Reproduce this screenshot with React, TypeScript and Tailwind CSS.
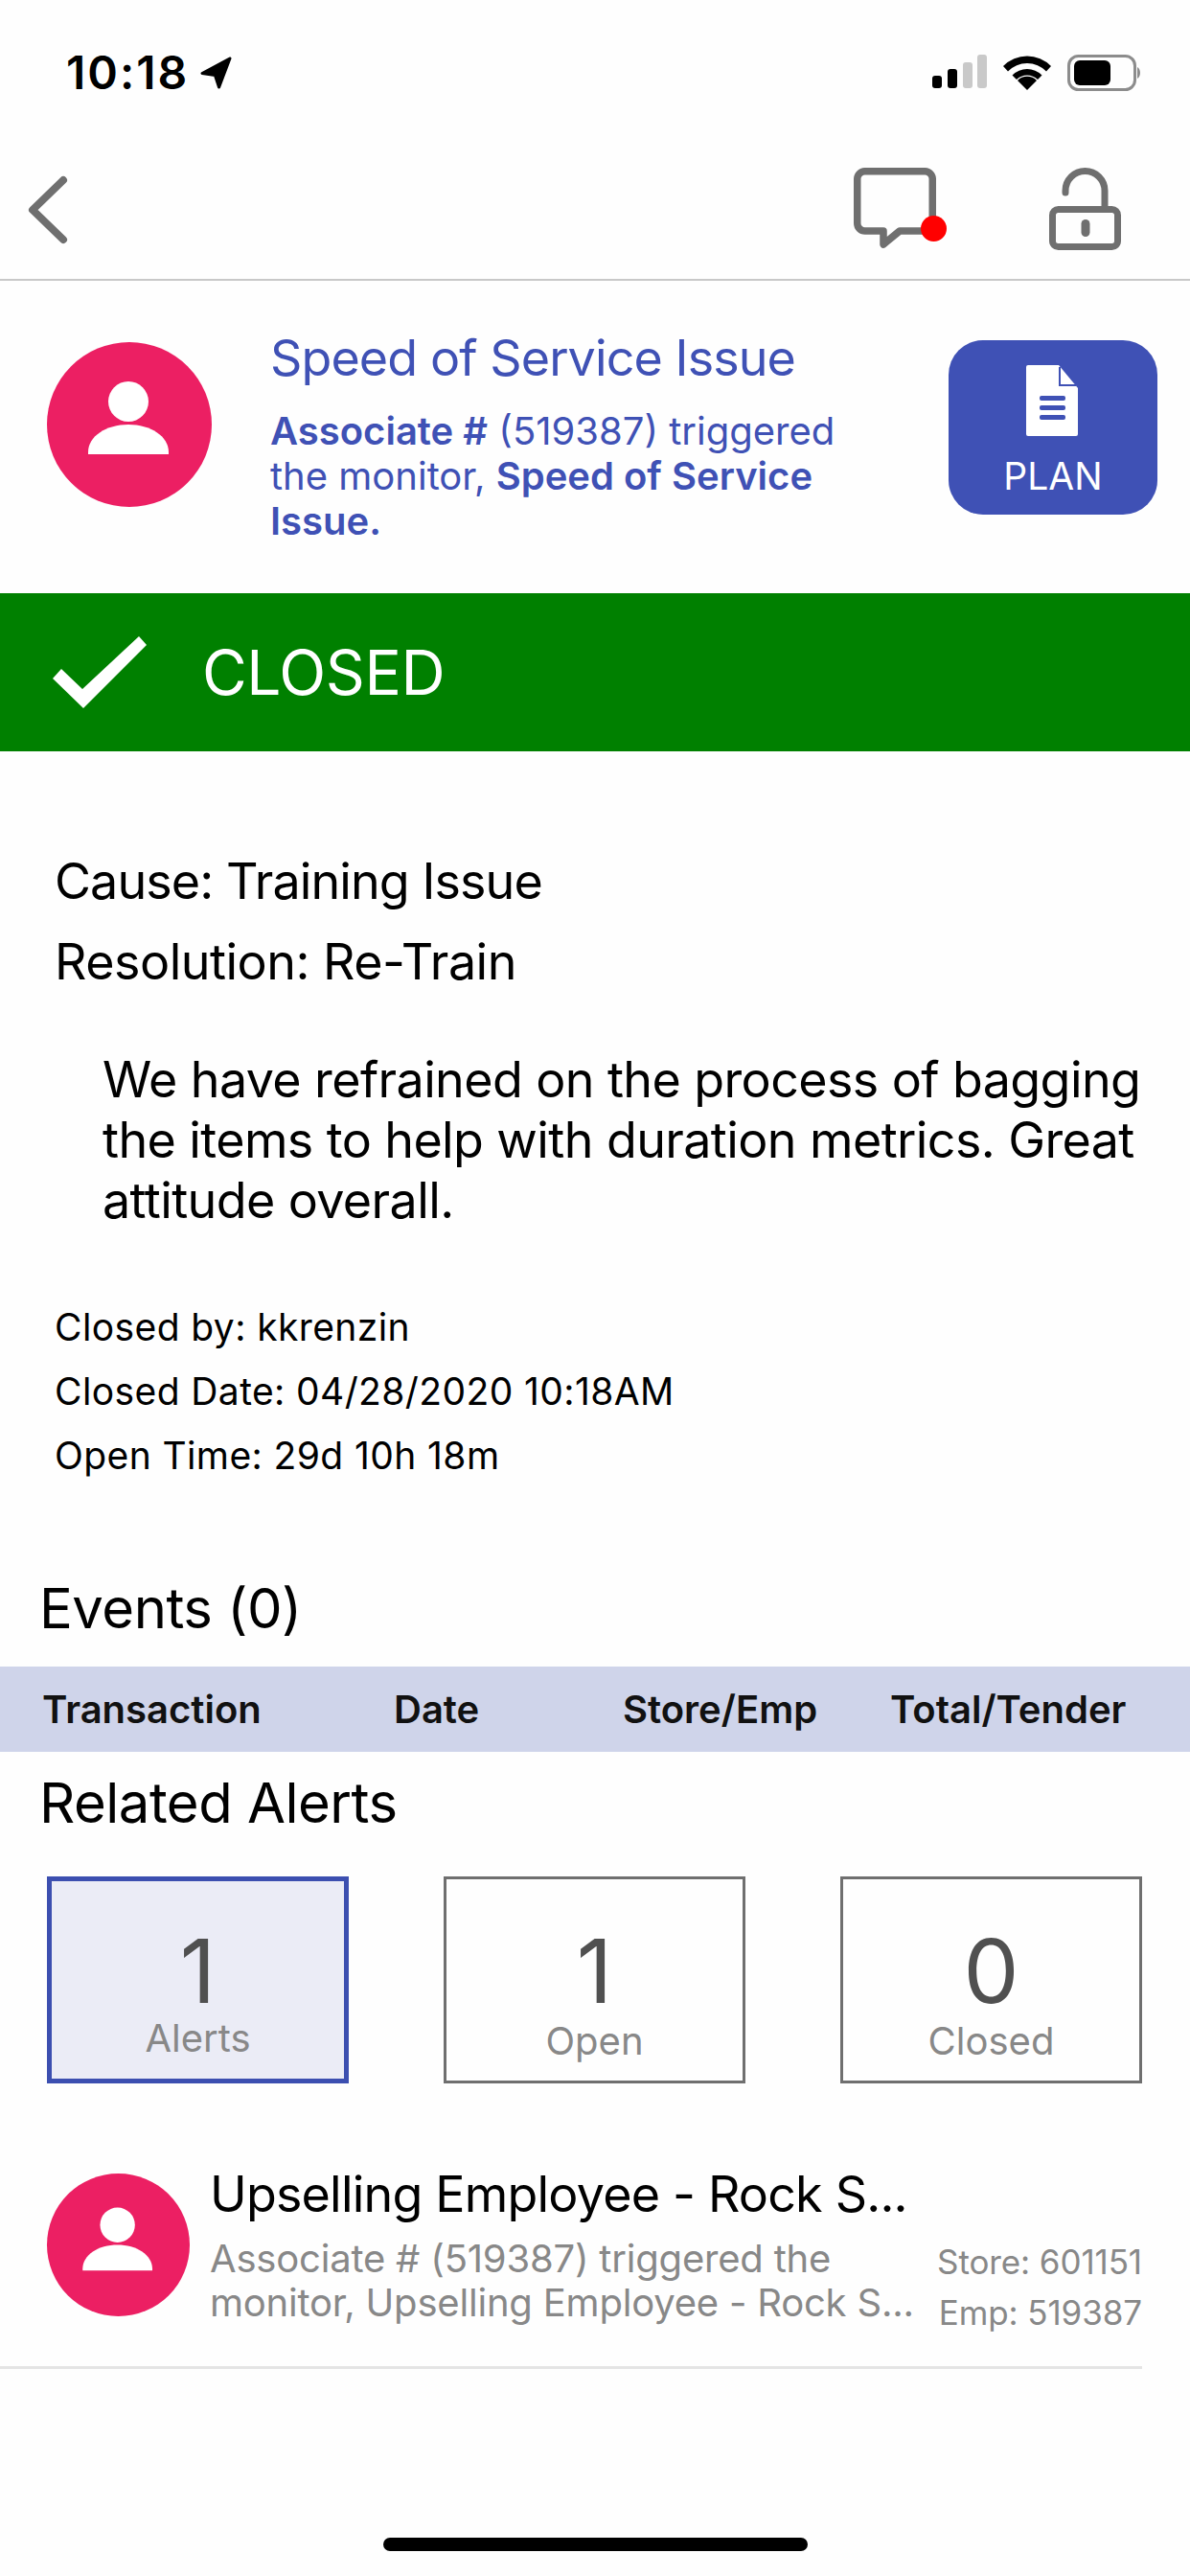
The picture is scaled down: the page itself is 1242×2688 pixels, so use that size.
import React from "react";

function Person({ size }: { size: number }) {
  return (
    <div className="rounded-full bg-[#ec1f63] flex items-center justify-center shrink-0" style={{ width: size, height: size }}>
      <svg viewBox="0 0 172 172" width={size} height={size}>
        <circle cx="85" cy="62" r="21" fill="#fff" />
        <path d="M43 117 V115 C43 98 62 86 85 86 C108 86 127 98 127 115 V117 Z" fill="#fff" />
      </svg>
    </div>
  );
}

function Box({ n, label, active, labelClass }: { n: string; label: string; active?: boolean; labelClass: string }) {
  return (
    <div className={active ? "w-[315px] h-[216px] border-[5px] border-[#3c4fb0] bg-[#ebecf6] flex flex-col items-center" : "w-[315px] h-[216px] border-[3px] border-[#6f6f6f] flex flex-col items-center"}>
      <div className={active ? "text-[92px] leading-[92px] mt-[48px] text-[#505050]" : "text-[92px] leading-[92px] mt-[50px] text-[#505050]"}>{n}</div>
      <div className={labelClass}>{label}</div>
    </div>
  );
}

export default function App() {
  return (
    <div className="w-[1242px] h-[2688px] bg-[#fefefe] flex flex-col font-['Inter',sans-serif] overflow-hidden relative">
      {/* status bar */}
      <div className="h-[150px] flex items-start justify-between pt-[51px] pl-[69px] pr-[52px] shrink-0">
        <div className="flex items-center gap-[12px] font-semibold text-[48px] leading-[50px] tracking-[2px] text-black">
          <span>10:18</span>
          <svg viewBox="0 0 32 33" width="33" height="34"><path d="M30 2 L2 17 L15 19 L19 31 Z" fill="#000" stroke="#000" strokeWidth="3" strokeLinejoin="round" /></svg>
        </div>
        <div className="flex items-start gap-[17px] pt-[6px]">
          <svg width="57" height="36" viewBox="0 0 57 36">
            <rect x="0" y="22" width="10" height="13" rx="3" fill="#000" />
            <rect x="16" y="15" width="10" height="20" rx="3" fill="#000" />
            <rect x="32" y="8" width="10" height="27" rx="3" fill="#c9c9c9" />
            <rect x="47" y="0" width="10" height="35" rx="3" fill="#c9c9c9" />
          </svg>
          <svg width="50" height="37" viewBox="0 0 50 37">
            <path d="M25 37 L15 27 A14 14 0 0 1 35 27 Z" fill="#000" />
            <path d="M9.5 21.5 A22 22 0 0 1 40.5 21.5 L36 26 A15.5 15.5 0 0 0 14 26 Z" fill="#000" />
            <path d="M0 12 A35 35 0 0 1 50 12 L45 17.5 A28 28 0 0 0 5 17.5 Z" fill="#000" />
          </svg>
          <svg width="76" height="38" viewBox="0 0 76 38">
            <rect x="1.5" y="1.5" width="69" height="35" rx="10" fill="none" stroke="#8c8c8c" strokeWidth="3" />
            <rect x="7" y="6" width="38" height="26" rx="6" fill="#000" />
            <path d="M73 13 C77 15 77 23 73 25 Z" fill="#8c8c8c" />
          </svg>
        </div>
      </div>

      {/* nav */}
      <div className="h-[143px] border-b-2 border-[#c8c8c8] flex items-start justify-between shrink-0 relative">
        <svg viewBox="0 0 44 72" width="44" height="72" className="ml-[28px] mt-[33px]">
          <path d="M38 5 L6 36 L38 67" fill="none" stroke="#6f6f6f" strokeWidth="8" strokeLinecap="round" strokeLinejoin="round" />
        </svg>
        <div className="flex items-start mr-[72px] mt-[25px] gap-[118px]">
          <div className="relative w-[86px] h-[86px]">
            <svg viewBox="0 0 86 86" width="86" height="86">
              <path d="M12 3.75 H74 A8 8 0 0 1 82.25 12 V58 A8 8 0 0 1 74 66 H48 L31 80 V66 H12 A8 8 0 0 1 3.75 58 V12 A8 8 0 0 1 12 3.75 Z" fill="none" stroke="#6f6f6f" strokeWidth="7.5" strokeLinejoin="round" />
            </svg>
            <div className="absolute left-[70px] top-[50px] w-[27px] h-[27px] rounded-full bg-[#ff0000]" />
          </div>
          <svg viewBox="0 0 75 86" width="75" height="86">
            <path d="M17 26 V24 A20.5 20.5 0 0 1 58 24 V42" fill="none" stroke="#6f6f6f" strokeWidth="7" strokeLinecap="round" />
            <rect x="3.5" y="43.5" width="68" height="39" rx="6" fill="none" stroke="#6f6f6f" strokeWidth="7" />
            <rect x="33.5" y="54" width="9" height="18" rx="4.5" fill="#6f6f6f" />
          </svg>
        </div>
      </div>

      {/* alert header */}
      <div className="h-[326px] flex items-start shrink-0 relative pl-[49px]">
        <div className="mt-[64px]"><Person size={172} /></div>
        <div className="ml-[61px] mt-[50px] w-[650px] text-[#3f51b5]">
          <div className="text-[52px] leading-[62px] tracking-[-0.9px]">Speed of Service Issue</div>
          <div className="text-[40px] leading-[47px] mt-[21px]">
            <div><b className="font-semibold">Associate #</b> (519387) triggered</div>
            <div>the monitor, <b className="font-semibold">Speed of Service</b></div>
            <div><b className="font-semibold">Issue.</b></div>
          </div>
        </div>
        <div className="absolute left-[990px] top-[62px] w-[218px] h-[182px] rounded-[36px] bg-[#3f51b5] flex flex-col items-center text-white">
          <svg viewBox="0 0 56 74" width="56" height="74" className="mt-[26px]">
            <path d="M2 0 H34 L54 24 V72 Q54 74 52 74 H2 Q0 74 0 72 V2 Q0 0 2 0 Z" fill="#fff" />
            <path d="M35 2 V21 H52" fill="none" stroke="#3f51b5" strokeWidth="2" />
            <rect x="14" y="32" width="27" height="5" rx="2" fill="#3f51b5" />
            <rect x="14" y="42" width="27" height="5" rx="2" fill="#3f51b5" />
            <rect x="14" y="52" width="27" height="5" rx="2" fill="#3f51b5" />
          </svg>
          <div className="text-[39px] leading-[44px] mt-[20px]">PLAN</div>
        </div>
      </div>

      {/* status */}
      <div className="h-[165px] bg-[#008000] flex items-center pl-[55px] shrink-0 text-white">
        <svg viewBox="0 0 98 76" width="98" height="76">
          <polygon points="0,44 9,34 31,55 90,0 98,9 32,75" fill="#fff" />
        </svg>
        <span className="ml-[58px] text-[64px] leading-[76px] tracking-[-0.4px]">CLOSED</span>
      </div>

      {/* resolution */}
      <div className="pl-[57px] pt-[103px] text-black shrink-0">
        <div className="text-[52px] leading-[66px] tracking-[-0.9px]">Cause: Training Issue</div>
        <div className="text-[52px] leading-[66px] tracking-[-0.5px] mt-[18px]">Resolution: Re-Train</div>
        <div className="text-[52px] leading-[63px] tracking-[-0.6px] ml-[50px] mt-[58px] w-[1130px]">We have refrained on the process of bagging the items to help with duration metrics. Great attitude overall.</div>
        <div className="text-[39px] leading-[67px] mt-[67px] tracking-[0.4px]">
          <div>Closed by: kkrenzin</div>
          <div>Closed Date: 04/28/2020 10:18AM</div>
          <div>Open Time: 29d 10h 18m</div>
        </div>
      </div>

      {/* events */}
      <div className="pl-[41px] mt-[92px] text-[58px] leading-[68px] tracking-[-0.5px] text-black shrink-0">Events (0)</div>
      <div className="mt-[27px] h-[89px] bg-[#cfd4ea] flex items-center text-[40px] font-semibold text-[#111] shrink-0 relative">
        <div className="flex pl-[44px] w-full">
          <span className="w-[367px]">Transaction</span>
          <span className="w-[239px]">Date</span>
          <span className="w-[279px]">Store/Emp</span>
          <span>Total/Tender</span>
        </div>
      </div>
      <div className="pl-[41px] mt-[19px] text-[58px] leading-[68px] tracking-[-0.5px] text-black shrink-0">Related Alerts</div>

      {/* boxes */}
      <div className="mt-[43px] pl-[49px] pr-[50px] flex justify-between shrink-0">
        <Box n="1" label="Alerts" active labelClass="text-[40px] leading-[46px] mt-[1px] text-[#888]" />
        <Box n="1" label="Open" labelClass="text-[40px] leading-[46px] mt-[4px] text-[#888]" />
        <Box n="0" label="Closed" labelClass="text-[40px] leading-[46px] mt-[4px] text-[#888]" />
      </div>

      {/* row */}
      <div className="mt-[47px] mr-[50px] pl-[49px] h-[251px] border-b-[3px] border-[#e4e4e4] flex items-start shrink-0">
        <div className="mt-[47px]"><Person size={149} /></div>
        <div className="ml-[21px] flex-1 min-w-0">
          <div className="text-[52px] leading-[62px] tracking-[-0.8px] text-black mt-[38px]">Upselling Employee - Rock S...</div>
          <div className="flex justify-between mt-[13px]">
            <div className="text-[40px] leading-[46px] tracking-[-0.2px] text-[#888] whitespace-nowrap">
              <div>Associate # (519387) triggered the</div>
              <div>monitor, Upselling Employee - Rock S...</div>
            </div>
            <div className="text-[35px] leading-[53px] tracking-[-0.1px] text-[#888] text-right whitespace-nowrap">
              <div>Store: 601151</div>
              <div>Emp: 519387</div>
            </div>
          </div>
        </div>
      </div>

      {/* home indicator */}
      <div className="absolute left-[400px] bottom-[26px] w-[443px] h-[14px] rounded-full bg-black" />
    </div>
  );
}
